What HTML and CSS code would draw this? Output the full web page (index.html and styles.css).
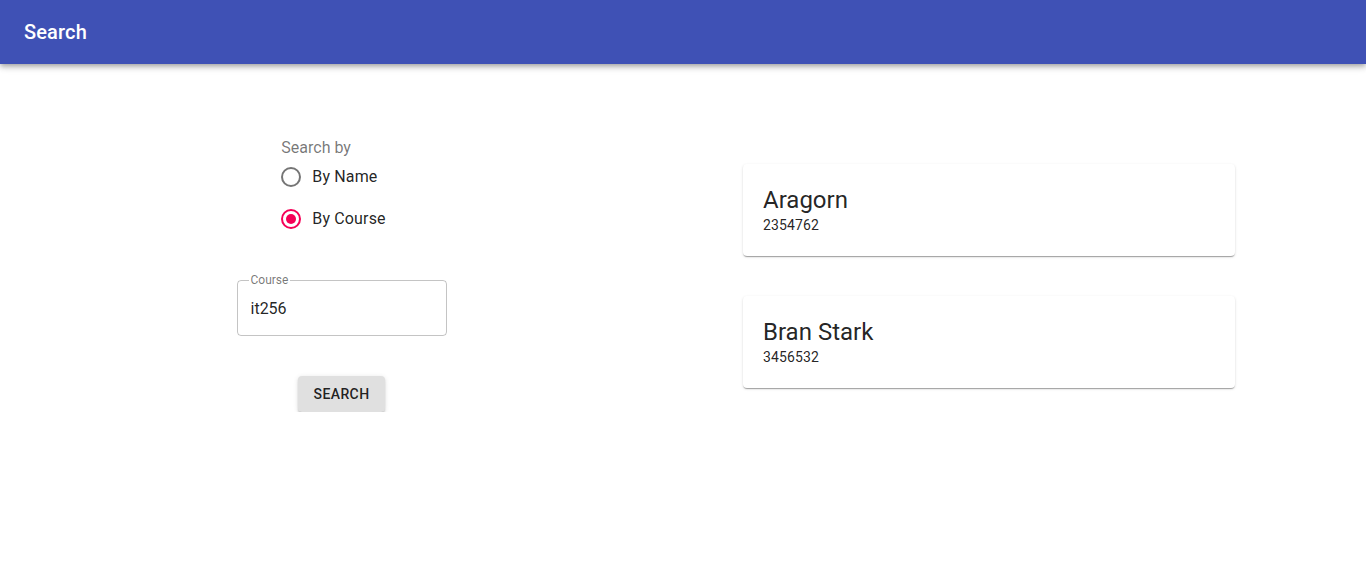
FILE: index.html
```html
<!DOCTYPE html>
<html lang="en">
<head>
<meta charset="utf-8">
<title>Search</title>
<link rel="stylesheet" href="styles.css">
</head>
<body>
<header class="appbar">
  <h1 class="appbar-title">Search</h1>
</header>
<main class="main">
  <section class="left">
    <div class="form-control">
      <div class="form-label">Search by</div>
      <label class="radio-row">
        <span class="radio">
          <svg viewBox="0 0 24 24" width="24" height="24"><circle cx="12" cy="12" r="9" fill="none" stroke="rgba(0,0,0,0.54)" stroke-width="2"/></svg>
        </span>
        <span class="radio-text">By Name</span>
      </label>
      <label class="radio-row">
        <span class="radio">
          <svg viewBox="0 0 24 24" width="24" height="24"><circle cx="12" cy="12" r="9" fill="none" stroke="#f50057" stroke-width="2"/><circle cx="12" cy="12" r="5" fill="#f50057"/></svg>
        </span>
        <span class="radio-text">By Course</span>
      </label>
    </div>
    <div class="field">
      <span class="field-label">Course</span>
      <input class="field-input" type="text" value="it256">
    </div>
    <button class="btn" type="button">Search</button>
  </section>
  <section class="right">
    <div class="card">
      <div class="card-title">Aragorn</div>
      <div class="card-sub">2354762</div>
    </div>
    <div class="card">
      <div class="card-title">Bran Stark</div>
      <div class="card-sub">3456532</div>
    </div>
  </section>
</main>
</body>
</html>
```
FILE: styles.css
```css
* { box-sizing: border-box; }
html, body { margin: 0; padding: 0; background: #fff; }
body {
  font-family: Roboto, "Liberation Sans", Arial, sans-serif;
  color: rgba(0,0,0,0.87);
}
.appbar {
  height: 64px;
  background: #3f51b5;
  color: #fff;
  display: flex;
  align-items: center;
  padding: 0 24px;
  box-shadow: 0px 2px 4px -1px rgba(0,0,0,0.2), 0px 4px 5px 0px rgba(0,0,0,0.14), 0px 1px 10px 0px rgba(0,0,0,0.12);
  position: relative;
  z-index: 1;
}
.appbar-title {
  margin: 0;
  font-size: 20px;
  font-weight: 500;
  line-height: 32px;
  letter-spacing: 0.0075em;
}
.main {
  display: flex;
  align-items: center;
  padding-top: 76px;
}
.left {
  width: 683px;
  display: flex;
  flex-direction: column;
  align-items: center;
  gap: 40px;
}
.form-control {
  display: flex;
  flex-direction: column;
  align-items: flex-start;
}
.form-label {
  font-size: 16px;
  line-height: 1;
  color: rgba(0,0,0,0.54);
}
.radio-row {
  display: flex;
  align-items: center;
  margin-left: -11px;
  margin-right: 16px;
  cursor: pointer;
}
.radio {
  width: 42px;
  height: 42px;
  padding: 9px;
  display: flex;
}
.radio-text {
  font-size: 16px;
  line-height: 1.5;
  letter-spacing: 0.00938em;
}
.field {
  position: relative;
  width: 210px;
  height: 56px;
  border: 1px solid rgba(0,0,0,0.23);
  border-radius: 4px;
}
.field-label {
  position: absolute;
  top: -7px;
  left: 11px;
  padding: 0 2px;
  background: #fff;
  font-size: 12px;
  line-height: 12px;
  color: rgba(0,0,0,0.54);
}
.field-input {
  display: block;
  width: 100%;
  border: 0;
  outline: 0;
  background: transparent;
  font: inherit;
  font-size: 16px;
  line-height: 19px;
  height: 54px;
  padding: 17.5px 13px;
  color: rgba(0,0,0,0.87);
}
.btn {
  height: 36px;
  padding: 6px 16px;
  border: 0;
  border-radius: 4px;
  background: #e0e0e0;
  color: rgba(0,0,0,0.87);
  font-family: inherit;
  font-size: 14px;
  font-weight: 500;
  line-height: 1.75;
  letter-spacing: 0.02857em;
  text-transform: uppercase;
  box-shadow: 0px 3px 1px -2px rgba(0,0,0,0.2), 0px 2px 2px 0px rgba(0,0,0,0.14), 0px 1px 5px 0px rgba(0,0,0,0.12);
  cursor: pointer;
}
.right {
  padding-left: 60px;
  display: flex;
  flex-direction: column;
  gap: 40px;
}
.card {
  width: 492px;
  padding: 20px 20px 22px;
  border-radius: 4px;
  background: #fff;
  box-shadow: 0px 2px 1px -1px rgba(0,0,0,0.2), 0px 1px 1px 0px rgba(0,0,0,0.14), 0px 1px 3px 0px rgba(0,0,0,0.12);
}
.card-title {
  font-size: 24px;
  line-height: 32px;
  font-weight: 400;
}
.card-sub {
  font-size: 14px;
  line-height: 18px;
  letter-spacing: 0.01071em;
}
```
